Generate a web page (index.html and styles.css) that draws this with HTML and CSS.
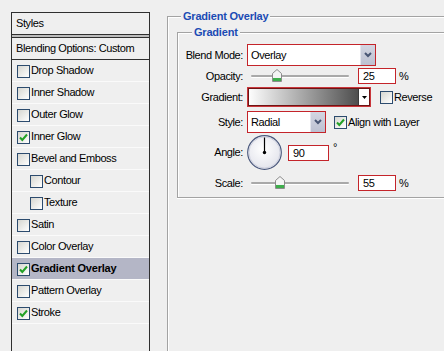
FILE: index.html
```html
<!DOCTYPE html>
<html>
<head>
<meta charset="utf-8">
<title>Layer Style - Gradient Overlay</title>
<link rel="stylesheet" href="styles.css">
</head>
<body>
<div class="dialog">
  <div class="styles-panel">
    <div class="panel-head">Styles</div>
    <div class="panel-divider"></div>
    <div class="panel-blend">Blending Options: Custom</div>
    <ul class="fx-list">
      <li class="fx"><span class="cb"></span>Drop Shadow</li>
      <li class="fx"><span class="cb"></span>Inner Shadow</li>
      <li class="fx"><span class="cb"></span>Outer Glow</li>
      <li class="fx"><span class="cb"><svg class="tick" width="11" height="11" viewBox="0 0 11 11"><polyline points="2,5.5 4.3,8 9,2.5" fill="none" stroke="#23a127" stroke-width="2"/></svg></span>Inner Glow</li>
      <li class="fx"><span class="cb"></span>Bevel and Emboss</li>
      <li class="fx sub"><span class="cb"></span>Contour</li>
      <li class="fx sub"><span class="cb"></span>Texture</li>
      <li class="fx"><span class="cb"></span>Satin</li>
      <li class="fx"><span class="cb"></span>Color Overlay</li>
      <li class="fx active"><span class="cb"><svg class="tick" width="11" height="11" viewBox="0 0 11 11"><polyline points="2,5.5 4.3,8 9,2.5" fill="none" stroke="#23a127" stroke-width="2"/></svg></span>Gradient Overlay</li>
      <li class="fx"><span class="cb"></span>Pattern Overlay</li>
      <li class="fx"><span class="cb"><svg class="tick" width="11" height="11" viewBox="0 0 11 11"><polyline points="2,5.5 4.3,8 9,2.5" fill="none" stroke="#23a127" stroke-width="2"/></svg></span>Stroke</li>
    </ul>
  </div>

  <div class="settings">
    <fieldset class="group outer">
      <legend>Gradient Overlay</legend>
      <fieldset class="group inner">
        <legend>Gradient</legend>

        <div class="row r-blend">
          <span class="lbl">Blend Mode:</span>
          <div class="select sel-wide">
            <span class="sel-text">Overlay</span>
            <span class="sel-btn"><svg width="8" height="6" viewBox="0 0 8 6"><polyline points="1,1 4,4 7,1" fill="none" stroke="#485574" stroke-width="2"/></svg></span>
          </div>
        </div>

        <div class="row r-opacity">
          <span class="lbl">Opacity:</span>
          <div class="slider">
            <div class="track"></div>
            <svg class="thumb" style="left:25px" width="10" height="13" viewBox="0 0 10 13"><polygon points="0.5,4.5 5,0.5 9.5,4.5 9.5,12.5 0.5,12.5" fill="#f4f4f4" stroke="#8c8c8c"/><rect x="1" y="9" width="8" height="3" fill="#3eae4c"/></svg>
          </div>
          <span class="num">25</span>
          <span class="unit">%</span>
        </div>

        <div class="row r-gradient">
          <span class="lbl">Gradient:</span>
          <div class="grad">
            <span class="grad-fill"></span>
            <span class="grad-btn"><svg width="5" height="3" viewBox="0 0 5 3"><polygon points="0,0 5,0 2.5,3" fill="#000"/></svg></span>
          </div>
          <span class="check reverse"><span class="cb"></span>Reverse</span>
        </div>

        <div class="row r-style">
          <span class="lbl">Style:</span>
          <div class="select sel-narrow">
            <span class="sel-text">Radial</span>
            <span class="sel-btn"><svg width="8" height="6" viewBox="0 0 8 6"><polyline points="1,1 4,4 7,1" fill="none" stroke="#485574" stroke-width="2"/></svg></span>
          </div>
          <span class="check align"><span class="cb"><svg class="tick" width="11" height="11" viewBox="0 0 11 11"><polyline points="2,5.5 4.3,8 9,2.5" fill="none" stroke="#23a127" stroke-width="2"/></svg></span>Align with Layer</span>
        </div>

        <div class="row r-angle">
          <span class="lbl">Angle:</span>
          <svg class="dial" width="36" height="36" viewBox="0 0 36 36">
            <defs>
              <radialGradient id="dialFill" cx="45%" cy="40%" r="60%">
                <stop offset="0" stop-color="#ffffff"/>
                <stop offset="1" stop-color="#e3e4ec"/>
              </radialGradient>
            </defs>
            <circle cx="17.5" cy="17.5" r="16.8" fill="url(#dialFill)" stroke="#4a587c" stroke-width="1.2"/>
            <circle cx="17.5" cy="17.5" r="15.6" fill="none" stroke="#cdd0de" stroke-width="1"/>
            <line x1="17.5" y1="17.5" x2="17.5" y2="2.5" stroke="#000" stroke-width="1.2"/>
            <circle cx="17.5" cy="17.5" r="1.7" fill="#000"/>
          </svg>
          <span class="num num-angle">90</span>
          <span class="deg">°</span>
        </div>

        <div class="row r-scale">
          <span class="lbl">Scale:</span>
          <div class="slider">
            <div class="track"></div>
            <svg class="thumb" style="left:28px" width="10" height="13" viewBox="0 0 10 13"><polygon points="0.5,4.5 5,0.5 9.5,4.5 9.5,12.5 0.5,12.5" fill="#f4f4f4" stroke="#8c8c8c"/><rect x="1" y="9" width="8" height="3" fill="#3eae4c"/></svg>
          </div>
          <span class="num">55</span>
          <span class="unit">%</span>
        </div>
      </fieldset>
    </fieldset>
  </div>
</div>
</body>
</html>
```

FILE: styles.css
```css
* { box-sizing: border-box; }
html, body { margin: 0; height: 100%; }
body {
  background: #efefef;
  overflow: hidden;
  font-family: "Liberation Sans", Arial, sans-serif;
  font-size: 11px;
  letter-spacing: -0.4px;
  color: #000;
}
.dialog { display: flex; align-items: flex-start; height: 351px; overflow: hidden; }

/* left styles list */
.styles-panel {
  flex: none;
  width: 139px;
  height: 339px;
  margin: 12px 0 0 11px;
  border: 1px solid #2f2f2f;
  border-bottom: 0;
}
.panel-head {
  height: 22px;
  line-height: 21px;
  padding-left: 4px;
  border-bottom: 1px solid #2f2f2f;
}
.panel-divider { height: 2px; background: #bdbdbd; }
.panel-blend {
  height: 23px;
  line-height: 21px;
  padding-left: 4px;
  border-top: 1px solid #2f2f2f;
  border-bottom: 1px solid #2f2f2f;
}
.fx-list { list-style: none; margin: 0; padding: 0; }
.fx {
  display: flex;
  align-items: flex-start;
  height: 22px;
  line-height: 21px;
  padding-left: 5px;
  border-bottom: 1px solid #fafafa;
}
.fx .cb { margin-top: 5px; }
.fx.sub { padding-left: 18px; }
.fx.active { background: #b4b6c6; font-weight: bold; letter-spacing: -0.2px; }

.cb {
  flex: none;
  display: flex;
  align-items: center;
  justify-content: center;
  width: 13px;
  height: 13px;
  margin-right: 1px;
  border: 1px solid #2c4b6e;
  background: linear-gradient(135deg, #d6d6d0, #ffffff);
}

/* right settings */
.settings { flex: none; width: 277px; margin-left: 17px; padding-top: 9px; }
.group {
  margin: 0;
  min-width: 0;
  border: 1px solid #a3a3a3;
  border-right: 0;
  box-shadow: inset 1px 1px 0 #fff, 0 1px 0 #fff;
}
.group > legend {
  padding: 0 2px;
  line-height: 14px;
  font-weight: bold;
  color: #1b4bb4;
  letter-spacing: -0.2px;
  background: #efefef;
}
.outer { width: 277px; height: 342px; border-bottom: 0; padding: 2px 0 0 9px; box-shadow: inset 1px 1px 0 #fff; }
.outer > legend { margin-left: 4px; }
.inner { padding: 5px 0 6px 0; }
.inner > legend { margin-left: 14px; }

.row { display: flex; align-items: center; }
.lbl { flex: none; width: 65px; margin-right: 4px; text-align: right; }
.r-blend { height: 22px; }
.r-opacity { height: 16px; margin-top: 2px; }
.r-gradient { height: 20px; margin-top: 3px; }
.r-style { height: 22px; margin-top: 4px; }
.r-angle { height: 36px; margin-top: 2px; align-items: flex-start; }
.r-angle .lbl { margin-top: 11px; }
.r-scale { height: 16px; margin-top: 4px; }

.select {
  flex: none;
  display: flex;
  height: 22px;
  border: 1px solid #c4242a;
  background: #fff;
}
.sel-wide { width: 129px; }
.sel-narrow { width: 79px; }
.sel-text { flex: 1; padding-left: 3px; line-height: 20px; }
.sel-btn {
  flex: none;
  width: 15px;
  display: flex;
  align-items: center;
  justify-content: center;
  background: linear-gradient(#d3d6e2, #bcc0d1);
  border-left: 1px solid #e4e6ee;
}

.slider {
  position: relative;
  flex: none;
  display: flex;
  align-items: center;
  width: 111px;
  height: 16px;
  padding-left: 4px;
}
.track {
  width: 98px;
  height: 2px;
  background: #a9a9a9;
  border-radius: 1px;
  box-shadow: 0 1px 0 #fff;
}
.thumb { position: absolute; top: 1px; }

.num {
  flex: none;
  width: 38px;
  height: 16px;
  padding-left: 4px;
  line-height: 14px;
  border: 1px solid #c4242a;
  background: #fff;
}
.unit { margin-left: 3px; }

.grad {
  flex: none;
  display: flex;
  width: 124px;
  height: 20px;
  padding: 1px;
  border: 1px solid #c9363b;
  box-shadow: inset 0 0 0 1px #6e1414;
}
.grad-fill { flex: 1; background: linear-gradient(to right, #fdfdfd, #4e4e4e); }
.grad-btn {
  flex: none;
  width: 11px;
  display: flex;
  align-items: center;
  justify-content: center;
  border-left: 1px solid #3a3a3a;
  background: #fff;
}

.check { display: flex; align-items: center; }
.reverse { margin-left: 9px; }
.align { margin-left: 8px; }

.dial { flex: none; display: block; }
.num-angle { width: 41px; margin-left: 5px; margin-top: 10px; }
.deg { margin-left: 4px; margin-top: 7px; line-height: 11px; }
```
